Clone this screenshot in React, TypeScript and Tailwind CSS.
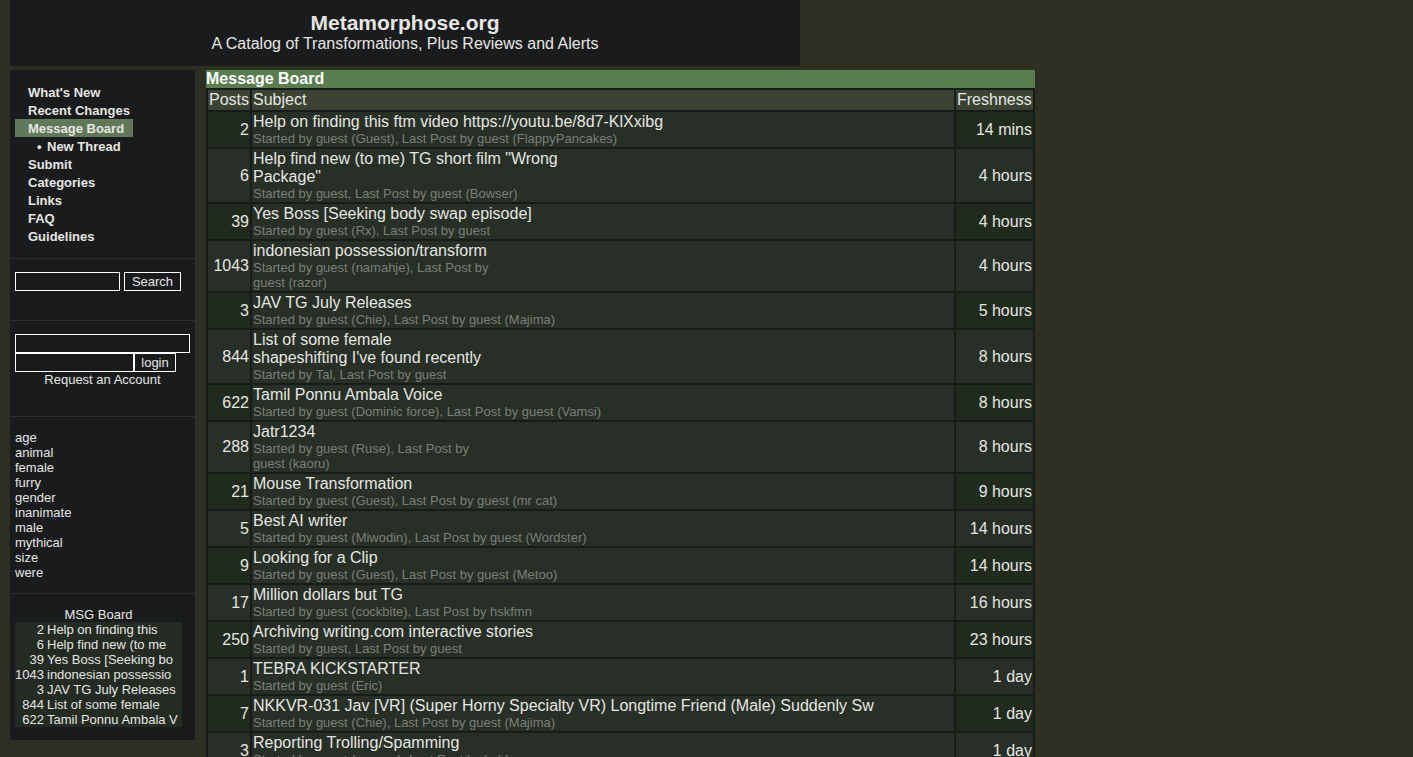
import React from "react";

type Thread = {
  posts: number;
  subject: string[];
  meta: string[];
  fresh: string;
};

const threads: Thread[] = [
  { posts: 2, subject: ["Help on finding this ftm video https://youtu.be/8d7-KlXxibg"], meta: ["Started by guest (Guest), Last Post by guest (FlappyPancakes)"], fresh: "14 mins" },
  { posts: 6, subject: ['Help find new (to me) TG short film "Wrong', 'Package"'], meta: ["Started by guest, Last Post by guest (Bowser)"], fresh: "4 hours" },
  { posts: 39, subject: ["Yes Boss [Seeking body swap episode]"], meta: ["Started by guest (Rx), Last Post by guest"], fresh: "4 hours" },
  { posts: 1043, subject: ["indonesian possession/transform"], meta: ["Started by guest (namahje), Last Post by", "guest (razor)"], fresh: "4 hours" },
  { posts: 3, subject: ["JAV TG July Releases"], meta: ["Started by guest (Chie), Last Post by guest (Majima)"], fresh: "5 hours" },
  { posts: 844, subject: ["List of some female", "shapeshifting I've found recently"], meta: ["Started by Tal, Last Post by guest"], fresh: "8 hours" },
  { posts: 622, subject: ["Tamil Ponnu Ambala Voice"], meta: ["Started by guest (Dominic force), Last Post by guest (Vamsi)"], fresh: "8 hours" },
  { posts: 288, subject: ["Jatr1234"], meta: ["Started by guest (Ruse), Last Post by", "guest (kaoru)"], fresh: "8 hours" },
  { posts: 21, subject: ["Mouse Transformation"], meta: ["Started by guest (Guest), Last Post by guest (mr cat)"], fresh: "9 hours" },
  { posts: 5, subject: ["Best AI writer"], meta: ["Started by guest (Miwodin), Last Post by guest (Wordster)"], fresh: "14 hours" },
  { posts: 9, subject: ["Looking for a Clip"], meta: ["Started by guest (Guest), Last Post by guest (Metoo)"], fresh: "14 hours" },
  { posts: 17, subject: ["Million dollars but TG"], meta: ["Started by guest (cockbite), Last Post by hskfmn"], fresh: "16 hours" },
  { posts: 250, subject: ["Archiving writing.com interactive stories"], meta: ["Started by guest, Last Post by guest"], fresh: "23 hours" },
  { posts: 1, subject: ["TEBRA KICKSTARTER"], meta: ["Started by guest (Eric)"], fresh: "1 day" },
  { posts: 7, subject: ["NKKVR-031 Jav [VR] (Super Horny Specialty VR) Longtime Friend (Male) Suddenly Sw"], meta: ["Started by guest (Chie), Last Post by guest (Majima)"], fresh: "1 day" },
  { posts: 3, subject: ["Reporting Trolling/Spamming"], meta: ["Started by guest (season), Last Post by hskfmn"], fresh: "1 day" },
];

const navItems = ["What's New", "Recent Changes", "Message Board", "New Thread", "Submit", "Categories", "Links", "FAQ", "Guidelines"];
const categories = ["age", "animal", "female", "furry", "gender", "inanimate", "male", "mythical", "size", "were"];
const recent: [number, string][] = [
  [2, "Help on finding this"],
  [6, "Help find new (to me"],
  [39, "Yes Boss [Seeking bo"],
  [1043, "indonesian possessio"],
  [3, "JAV TG July Releases"],
  [844, "List of some female"],
  [622, "Tamil Ponnu Ambala V"],
];

function Lines({ lines }: { lines: string[] }) {
  return (
    <>
      {lines.map((line) => (
        <span key={line} className="block">{line}</span>
      ))}
    </>
  );
}

function NavItem({ label }: { label: string }) {
  if (label === "New Thread") {
    return (
      <li>
        <a href="#new-thread" className="flex pl-[22px] pt-px">
          <span className="w-[10px]">•</span>
          {label}
        </a>
      </li>
    );
  }
  const active = label === "Message Board";
  return (
    <li>
      <a href="#nav" className={active ? "block bg-[#61795a] pl-[13px] pt-px" : "block pl-[13px] pt-px"}>{label}</a>
    </li>
  );
}

function Sidebar() {
  const section = "border-b border-[#2c2e30] px-[5px] pt-[13px]";
  const field = "block h-[19px] border border-white bg-transparent px-1 text-[13px] leading-[15px] text-[#e6e6e2] outline-none";
  const button = "block h-[19px] border border-white bg-transparent text-center text-[13px] leading-[15px] text-[#e6e6e2]";
  return (
    <aside className="w-[185px] shrink-0 bg-[#191b1d] text-[13px] leading-[15px]">
      <nav className={`${section} pb-[13px]`}>
        <ul className="w-[118px] font-bold leading-[17px]">
          {navItems.map((label) => <NavItem key={label} label={label} />)}
        </ul>
      </nav>
      <form className={`${section} flex gap-1 pb-[29px]`}>
        <input type="text" aria-label="Search terms" className={`${field} w-[105px]`} />
        <button type="button" className={`${button} w-[57px]`}>Search</button>
      </form>
      <form className={`${section} pb-[29px]`}>
        <input type="text" aria-label="User name" className={`${field} w-full`} />
        <div className="flex">
          <input type="password" aria-label="Password" className={`${field} w-[119px]`} />
          <button type="button" className={`${button} w-[42px]`}>login</button>
        </div>
        <a href="#account" className="block text-center">Request an Account</a>
      </form>
      <ul className={`${section} pb-[13px]`}>
        {categories.map((name) => (
          <li key={name}><a href="#category">{name}</a></li>
        ))}
      </ul>
      <section className="px-[5px] py-[13px]">
        <h2 className="w-[167px] text-center">MSG Board</h2>
        <table className="w-[167px] border-collapse bg-[#232b22]">
          <tbody>
            {recent.map(([count, title]) => (
              <tr key={title}>
                <td className="w-[32px] p-0 pr-[3px] text-right">{count}</td>
                <td className="whitespace-nowrap p-0"><a href="#thread">{title}</a></td>
              </tr>
            ))}
          </tbody>
        </table>
      </section>
    </aside>
  );
}

function Board() {
  return (
    <main className="w-full max-w-[829px]">
      <h2 className="bg-[#5a7d50] font-bold text-white">Message Board</h2>
      <table className="w-full border-separate border-spacing-[2px] bg-[#161c19]">
        <thead>
          <tr className="bg-[#394233] text-left">
            <th className="w-[42px] p-px font-normal">Posts</th>
            <th className="p-px font-normal">Subject</th>
            <th className="w-[77px] p-px font-normal">Freshness</th>
          </tr>
        </thead>
        <tbody>
          {threads.map((thread) => (
            <tr key={thread.subject[0]} className="bg-[#272f26] odd:bg-[#212b1d]">
              <td className="p-px text-right">{thread.posts}</td>
              <td className="bg-[#272f26] p-px">
                <a href="#thread" className="block"><Lines lines={thread.subject} /></a>
                <div className="text-[13px] leading-[15px] text-[#7b7f79]"><Lines lines={thread.meta} /></div>
              </td>
              <td className="p-px text-right">{thread.fresh}</td>
            </tr>
          ))}
        </tbody>
      </table>
    </main>
  );
}

export default function App() {
  return (
    <div className="h-screen overflow-hidden bg-[#2d2f22] px-[10px] font-['Liberation_Sans',Arial,sans-serif] text-[16px] leading-[18px] text-[#e6e6e2]">
      <header className="max-w-[790px] bg-[#191b1d] pb-[13px] pt-[10px] text-center">
        <h1 className="text-[21px] font-bold leading-[25px]">Metamorphose.org</h1>
        <p>A Catalog of Transformations, Plus Reviews and Alerts</p>
      </header>
      <div className="mt-1 flex items-start gap-[11px]">
        <Sidebar />
        <Board />
      </div>
    </div>
  );
}
